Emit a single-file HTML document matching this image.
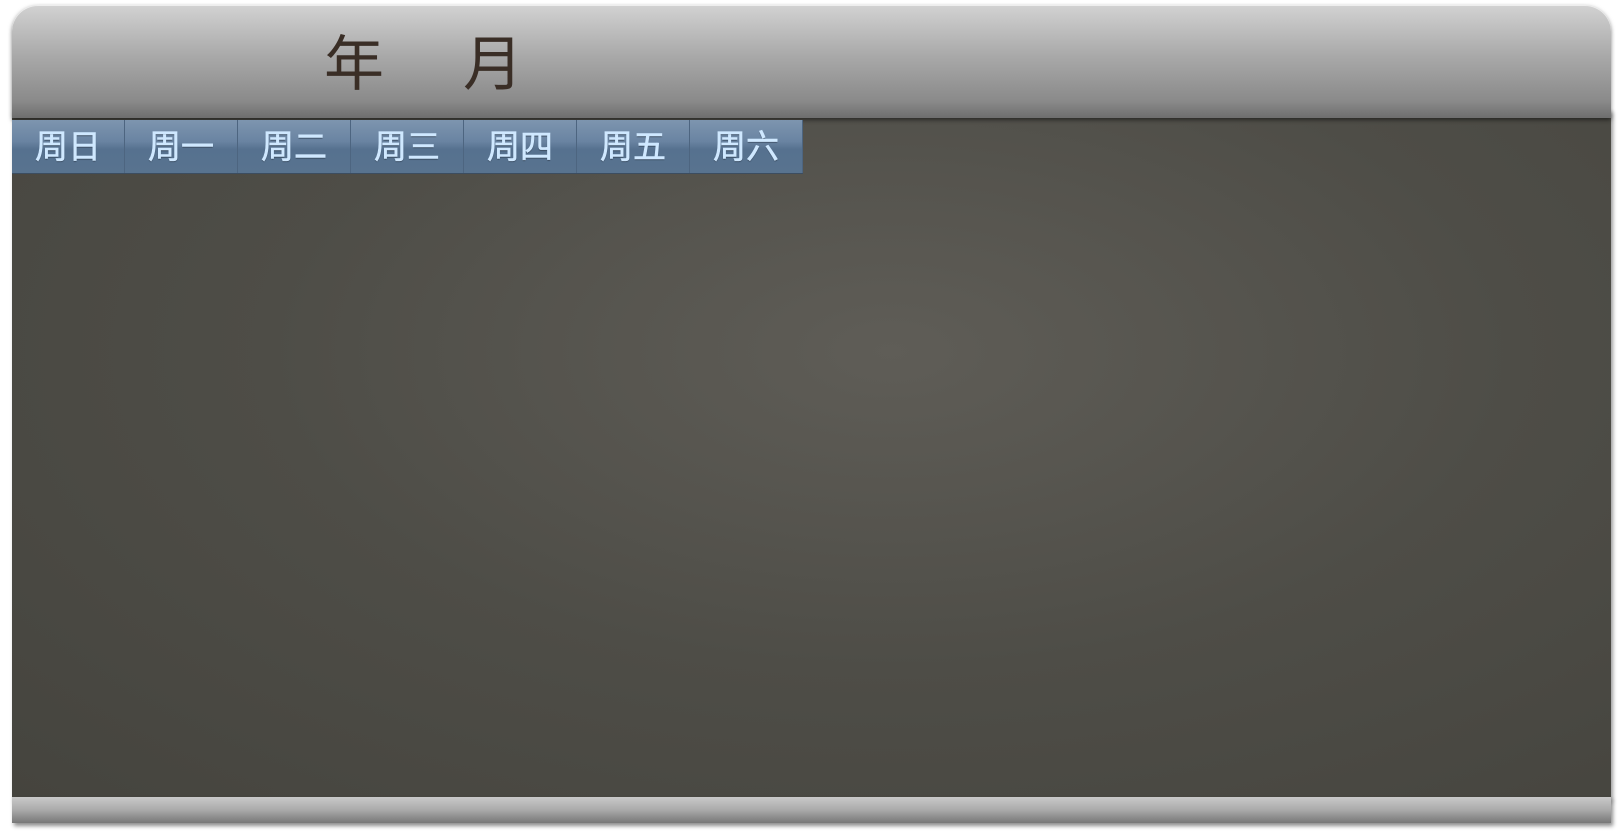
<!DOCTYPE html>
<html><head><meta charset="utf-8"><style>
html,body{margin:0;padding:0;background:#fff;width:1622px;height:833px;overflow:hidden;font-family:"Liberation Sans","Noto Sans CJK SC",sans-serif}
.panel{position:absolute;left:12px;top:110px;width:1599px;height:690px;background:radial-gradient(ellipse at 55% 35%,#5f5d57 0%,#4e4d47 50%,#45443e 100%);box-shadow:2px 2px 4px rgba(0,0,0,.4)}
.head{position:absolute;left:12px;top:5px;width:1599px;height:113px;border-radius:26px 26px 0 0;background:linear-gradient(#d2d2d2 0%,#a9a9a9 45%,#8a8a8a 85%,#6e6e6e 100%);box-shadow:0 2px 4px rgba(0,0,0,.5),inset 0 1px 0 #eee}
.title{position:absolute;top:30px;font-size:60px;color:#3a2e26;line-height:70px}
.week{position:absolute;left:12px;top:120px;height:53px;display:flex;background:linear-gradient(#7d95af 0%,#6a84a2 40%,#56718f 55%,#58738f 100%);border-bottom:1px solid #3c4d60}
.week div{width:112px;border-right:1px solid #4d6580;text-align:center;color:#cfe8ff;font-size:33px;line-height:54px;text-shadow:0 1px 1px #2f3e50;-webkit-text-stroke:0.6px #cfe8ff}
.foot{position:absolute;left:12px;top:797px;width:1599px;height:26px;background:linear-gradient(#c9c9c9 0%,#aaa 50%,#777 100%);box-shadow:2px 3px 4px rgba(0,0,0,.45)}
</style></head><body>
<div class="panel"></div>
<div class="head"></div>
<div class="title" style="left:324px">年</div>
<div class="title" style="left:463px">月</div>
<div class="week"><div>周日</div><div>周一</div><div>周二</div><div>周三</div><div>周四</div><div>周五</div><div>周六</div></div>
<div class="foot"></div>
</body></html>
